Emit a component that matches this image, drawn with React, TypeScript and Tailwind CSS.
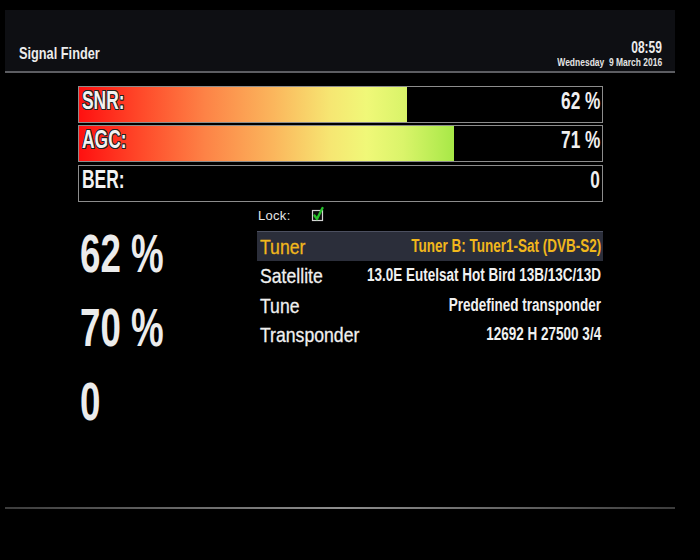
import React from "react";

const sans = { fontFamily: '"Liberation Sans", Arial, sans-serif' };

function Bar({ label, value, fill, outline }: { label: string; value: string; fill: number; outline: boolean }) {
  return (
    <div className="relative h-[37px] border border-[#8c8c8c] bg-black">
      <div className="absolute left-0 top-0 bottom-0 overflow-hidden" style={{ width: fill }}>
        <div className="h-full w-[523px] bg-[linear-gradient(to_right,#ff1010_0%,#ff4a2a_12%,#fd8246_24%,#fbb55c_37%,#f6e672_48%,#f0f878_55%,#daf46a_62%,#a6e846_72%,#7cdc30_100%)]" />
      </div>
      <div className="relative flex h-full items-start pl-[3px] pr-[2px]">
        <span
          className={
            "inline-block shrink-0 origin-left scale-x-[0.67] whitespace-nowrap text-[26px] font-bold leading-[26px] text-[#f2f2f2] " +
            (outline
              ? "[text-shadow:1px_1px_0_#222,-1px_-1px_0_#222,1px_-1px_0_#222,-1px_1px_0_#222,0_1px_0_#222,0_-1px_0_#222,1px_0_0_#222,-1px_0_0_#222]"
              : "")
          }
        >
          {label}
        </span>
        <div className="flex min-w-0 flex-1 justify-end">
          <span className="mt-[1px] inline-block shrink-0 origin-right scale-x-75 whitespace-nowrap text-[23px] font-bold leading-[26px] text-[#efefef]">
            {value}
          </span>
        </div>
      </div>
    </div>
  );
}

function Row({ label, value, active, h }: { label: string; value: string; active?: boolean; h?: string }) {
  const color = active ? "text-[#f1b71c]" : "text-[#f0f0f0]";
  return (
    <div
      className={
        "flex items-start pl-[3px] pr-[2px] " +
        (h ?? "h-[30px]") +
        " " +
        (active ? "border-t border-[#4c5060] bg-[#2b2e3a]" : "")
      }
    >
      <span className={"inline-block shrink-0 origin-left scale-x-[0.84] whitespace-nowrap text-[21px] leading-[29px] [-webkit-text-stroke:0.3px_currentColor] " + color}>
        {label}
      </span>
      <div className="flex min-w-0 flex-1 justify-end">
        <span className={"inline-block shrink-0 origin-right scale-x-75 whitespace-nowrap text-[18px] font-bold leading-[29px] " + color}>
          {value}
        </span>
      </div>
    </div>
  );
}

export default function App() {
  return (
    <div className="relative h-[560px] w-[700px] overflow-hidden bg-black text-white" style={sans}>
      <div className="h-[10px]" />
      <div className="mx-[5px] flex h-[63px] w-[670px] justify-between border-b-2 border-[#5c5d62] bg-[#0e0f13] pl-[14px] pr-[13px]">
        <div className="mt-[32px]">
          <span className="inline-block origin-left scale-x-75 whitespace-nowrap text-[17px] font-bold leading-[20px] text-[#ececec]">
            Signal Finder
          </span>
        </div>
        <div className="mt-[30px] flex flex-col items-end">
          <span className="inline-block origin-right scale-x-75 whitespace-nowrap text-[16px] font-bold leading-[16px] text-[#ececec]">
            08:59
          </span>
          <span className="inline-block origin-right scale-x-[0.77] whitespace-nowrap text-[11px] font-bold leading-[12px] text-[#e4e4e4]">
            Wednesday&nbsp; 9 March 2016
          </span>
        </div>
      </div>

      <div className="ml-[78px] mt-[13px] flex w-[525px] flex-col">
        <Bar label="SNR:" value="62 %" fill={328} outline />
        <div className="h-[2px]" />
        <Bar label="AGC:" value="71 %" fill={375} outline />
        <div className="h-[3px]" />
        <Bar label="BER:" value="0" fill={0} outline={false} />
      </div>

      <div className="flex">
        <div className="ml-[80px] mt-[24px] flex w-[177px] flex-col">
          {["62 %", "70 %", "0"].map((t) => (
            <div key={t} className="h-[74px]">
              <span className="inline-block origin-left scale-x-[0.68] whitespace-nowrap text-[54px] font-bold leading-[54px] text-[#ececec]">
                {t}
              </span>
            </div>
          ))}
        </div>
        <div className="mt-[6px] flex w-[346px] flex-col">
          <div className="flex h-[17px] items-start pl-[1px]">
            <span className="text-[13px] leading-[16px] tracking-[0.3px] text-[#e6e6e6]">Lock:</span>
            <svg className="ml-[20px] -mt-[2px]" width="13" height="16" viewBox="0 0 13 16">
              <rect x="1.5" y="4.5" width="10" height="10" fill="#0b0b0b" stroke="#d4d4d4" strokeWidth="1.2" />
              <path d="M3.5 9.5 L6 13 L11.5 2" fill="none" stroke="#26c02a" strokeWidth="2.4" strokeLinecap="round" strokeLinejoin="round" />
            </svg>
          </div>
          <div className="h-[6px]" />
          <Row label="Tuner" value="Tuner B: Tuner1-Sat (DVB-S2)" active />
          <Row label="Satellite" value="13.0E Eutelsat Hot Bird 13B/13C/13D" />
          <Row label="Tune" value="Predefined transponder" h="h-[29px]" />
          <Row label="Transponder" value="12692 H 27500 3/4" h="h-[29px]" />
        </div>
      </div>

      <div className="absolute left-[5px] top-[507px] h-[2px] w-[670px] bg-[linear-gradient(to_right,#3c3c3c,#8e8e8e_50%,#3c3c3c)]" />
    </div>
  );
}
